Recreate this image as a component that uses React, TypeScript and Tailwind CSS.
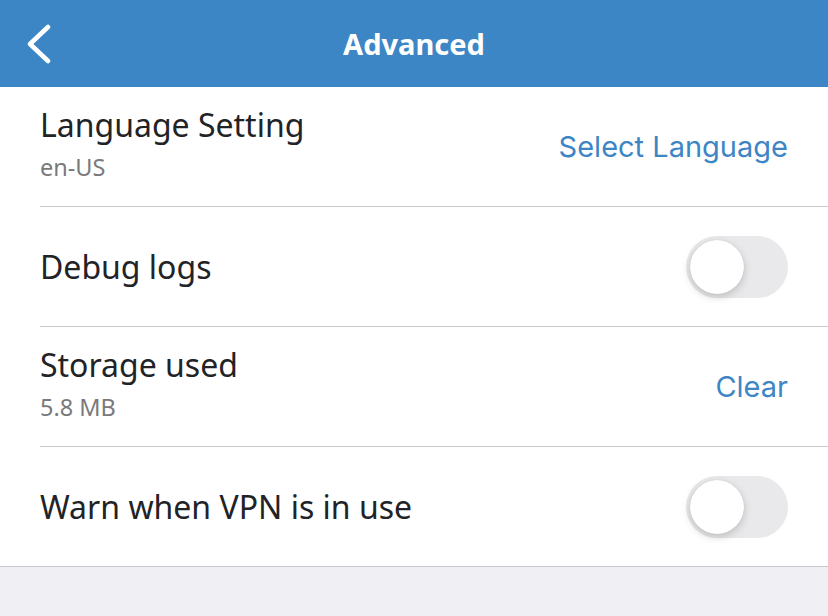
import React from "react";

const Toggle: React.FC = () => (
  <div className="relative h-[62px] w-[102px] rounded-full bg-[#e9e9eb]">
    <div className="absolute left-[4px] top-[4px] h-[54px] w-[54px] rounded-full bg-white shadow-[0_3px_8px_rgba(0,0,0,0.18),0_0_1px_rgba(0,0,0,0.2)]" />
  </div>
);

type RowProps = {
  title: string;
  sub?: string;
  right: React.ReactNode;
  last?: boolean;
};

const Row: React.FC<RowProps> = ({ title, sub, right, last }) => (
  <div className={last ? "" : "pl-[40px]"}>
    <div
      className={
        "flex h-[120px] items-center justify-between border-b border-[#c8c7cc] pr-[40px] " +
        (last ? "pl-[40px]" : "")
      }
    >
      <div className={"flex flex-col " + (sub ? "pb-[6px]" : "")}>
        <span className="text-[32px] leading-[38px] text-[#222326]">{title}</span>
        {sub && <span className="mt-[9px] text-[23.5px] leading-[28px] text-[#7a7a7c]">{sub}</span>}
      </div>
      {right}
    </div>
  </div>
);

const Link: React.FC<{ children: React.ReactNode }> = ({ children }) => (
  <span className="text-[29px] text-[#3d86c6] [font-family:Inter,sans-serif]">{children}</span>
);

export default function App() {
  return (
    <div className="min-h-[616px] w-full bg-[#efeff4] [font-family:'Noto_Sans',sans-serif]">
      <div className="relative flex h-[87px] items-center justify-center bg-[#3d86c6]">
        <svg className="absolute left-[24px] top-[24px]" width="30" height="40" viewBox="0 0 30 40" fill="none">
          <path d="M24 3 L6 20 L24 37" stroke="white" strokeWidth="4.5" strokeLinecap="round" strokeLinejoin="round" />
        </svg>
        <span className="text-[29px] font-bold text-white">Advanced</span>
      </div>
      <div className="bg-white">
        <Row title="Language Setting" sub="en-US" right={<Link>Select Language</Link>} />
        <Row title="Debug logs" right={<Toggle />} />
        <Row title="Storage used" sub="5.8 MB" right={<Link>Clear</Link>} />
        <Row title="Warn when VPN is in use" right={<Toggle />} last />
      </div>
    </div>
  );
}
